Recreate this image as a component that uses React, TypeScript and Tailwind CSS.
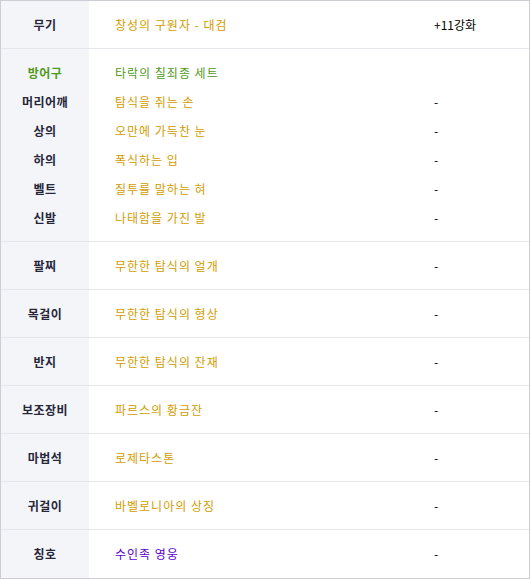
import React from 'react';

const gold = 'text-[#d29c00]';

type Row = { label: string; name: string; color: string; value: string };

const armor: Row[] = [
  { label: '방어구', name: '타락의 칠죄종 세트', color: 'text-[#4f9a1c]', value: '' },
  { label: '머리어깨', name: '탐식을 쥐는 손', color: gold, value: '-' },
  { label: '상의', name: '오만에 가득찬 눈', color: gold, value: '-' },
  { label: '하의', name: '폭식하는 입', color: gold, value: '-' },
  { label: '벨트', name: '질투를 말하는 혀', color: gold, value: '-' },
  { label: '신발', name: '나태함을 가진 발', color: gold, value: '-' },
];

const rest: Row[] = [
  { label: '팔찌', name: '무한한 탐식의 얼개', color: gold, value: '-' },
  { label: '목걸이', name: '무한한 탐식의 형상', color: gold, value: '-' },
  { label: '반지', name: '무한한 탐식의 잔재', color: gold, value: '-' },
  { label: '보조장비', name: '파르스의 황금잔', color: gold, value: '-' },
  { label: '마법석', name: '로제타스톤', color: gold, value: '-' },
  { label: '귀걸이', name: '바벨로니아의 상징', color: gold, value: '-' },
  { label: '칭호', name: '수인족 영웅', color: 'text-[#5a00cf]', value: '-' },
];

const SingleRow = ({ row, last }: { row: Row; last?: boolean }) => (
  <div className={`flex h-[48px] ${last ? '' : 'border-b border-[#e6e6ec]'}`}>
    <div className="w-[88px] bg-[#f4f5f9] flex items-center justify-center font-bold tracking-[0.5px] text-[#26263a]">
      {row.label}
    </div>
    <div className={`w-[345px] pl-[26px] flex items-center tracking-[1px] ${row.color}`}>{row.name}</div>
    <div className="flex items-center text-black">{row.value}</div>
  </div>
);

export default function App() {
  return (
    <div
      className="w-[530px] border border-[#cdcdd5] bg-white text-[12px] leading-none"
      style={{ fontFamily: '"Noto Sans CJK KR", "Noto Sans", sans-serif' }}
    >
      <div className="flex h-[48px] border-b border-[#e6e6ec]">
        <div className="w-[88px] bg-[#f4f5f9] flex items-center justify-center font-bold tracking-[0.5px] text-[#26263a]">무기</div>
        <div className={`w-[345px] pl-[26px] flex items-center tracking-[1px] ${gold}`}>창성의 구원자 - 대검</div>
        <div className="flex items-center text-black">+11강화</div>
      </div>

      <div className="flex h-[193px] border-b border-[#e6e6ec]">
        <div className="w-[88px] bg-[#f4f5f9] py-[9px] font-bold tracking-[0.5px]">
          {armor.map((r, i) => (
            <div
              key={r.label}
              className={`h-[29px] flex items-center justify-center ${i === 0 ? 'text-[#4f9a1c]' : 'text-[#26263a]'}`}
            >
              {r.label}
            </div>
          ))}
        </div>
        <div className="flex-1 py-[9px]">
          {armor.map(r => (
            <div key={r.label} className="h-[29px] flex items-center">
              <div className={`w-[345px] pl-[26px] tracking-[1px] ${r.color}`}>{r.name}</div>
              <div className="text-black">{r.value}</div>
            </div>
          ))}
        </div>
      </div>

      {rest.map((r, i) => (
        <SingleRow key={r.label} row={r} last={i === rest.length - 1} />
      ))}
    </div>
  );
}
